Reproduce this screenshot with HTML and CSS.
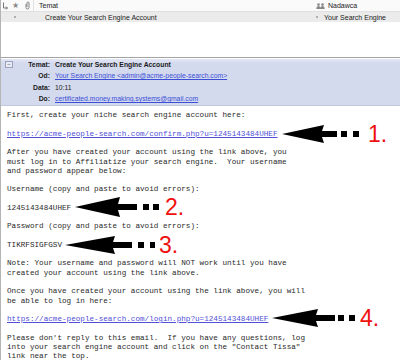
FILE: index.html
```html
<!DOCTYPE html>
<html>
<head>
    <title>Create Your Search Engine Account</title>
    <link rel="stylesheet" href="styles.css">
</head>
<body>
<div class="window">
    <div class="list">
        <div class="list-head">
            <div class="col col-thread">
                <svg width="7" height="8" viewBox="0 0 7 8"><path d="M1.5 0.5v5.5h4M4 4.5l1.5 1.5-1.5 1.5" fill="none" stroke="#777" stroke-width="1"/></svg>
            </div>
            <div class="col col-star">&#9733;</div>
            <div class="col col-clip">
                <svg width="5" height="9" viewBox="0 0 5 9"><path d="M1 3v3.5a1.5 1.5 0 0 0 3 0v-4.5a1 1 0 0 0-2 0v4" fill="none" stroke="#777" stroke-width="0.9"/></svg>
            </div>
            <div class="col col-subject">Temat</div>
            <div class="col col-sender">
                <svg class="people" width="9" height="6" viewBox="0 0 9 6"><circle cx="2.5" cy="1.6" r="1.3" fill="#888"/><circle cx="6.5" cy="1.6" r="1.3" fill="#888"/><path d="M0.3 6c0-2 1-3 2.2-3s2.2 1 2.2 3zM4.3 6c0-2 1-3 2.2-3s2.2 1 2.2 3z" fill="#888"/></svg>
                Nadawca
            </div>
        </div>
        <div class="list-row">
            <div class="col col-thread"></div>
            <div class="col col-star"><span class="dot"></span></div>
            <div class="col col-clip"></div>
            <div class="col col-subject">Create Your Search Engine Account</div>
            <div class="col col-sender"><span class="dot"></span>Your Search Engine</div>
        </div>
    </div>

    <div class="msg-header">
        <div class="toggle">&minus;</div>
        <div class="label">Temat:</div>
        <div class="value subject">Create Your Search Engine Account</div>

        <div></div>
        <div class="label">Od:</div>
        <div class="value"><a href="#">Your Search Engine &lt;admin@acme-people-search.com&gt;</a></div>

        <div></div>
        <div class="label">Data:</div>
        <div class="value">10:11</div>

        <div></div>
        <div class="label">Do:</div>
        <div class="value"><a href="#">certificated.money.making.systems@gmail.com</a></div>
    </div>

    <div class="msg-body">
<pre>First, create your niche search engine account here:

<a href="#">https://acme-people-search.com/confirm.php?u=1245143484UHEF</a>

After you have created your account using the link above, you
must log in to Affiliatize your search engine.  Your username
and password appear below:

Username (copy and paste to avoid errors):

1245143484UHEF

Password (copy and paste to avoid errors):

TIKRFSIGFGSV

Note: Your username and password will NOT work until you have
created your account using the link above.

Once you have created your account using the link above, you will
be able to log in here:

<a href="#">https://acme-people-search.com/login.php?u=1245143484UHEF</a>

Please don't reply to this email.  If you have any questions, log
into your search engine account and click on the "Contact Tissa"
link near the top.</pre>
    </div>

    <!-- arrows drawn over the mail text -->
    <div class="pointer p1">
        <svg width="80" height="18" viewBox="0 0 80 18"><polygon points="0,9 42,0 40,6 55,6 55,12 40,12 42,18" fill="#000"/><rect x="59" y="6" width="6" height="6"/><rect x="71" y="6" width="6" height="6"/></svg>
        <span class="num">1.</span>
    </div>
    <div class="pointer p2">
        <svg width="84" height="20" viewBox="0 0 84 20"><polygon points="0,10 45,0 43,7 62,7 62,13 43,13 45,20" fill="#000"/><rect x="68" y="7" width="6" height="6"/><rect x="78" y="7" width="6" height="6"/></svg>
        <span class="num">2.</span>
    </div>
    <div class="pointer p3">
        <svg width="90" height="18" viewBox="0 0 90 18"><polygon points="0,9 50,0 48,6 67,6 67,12 48,12 50,18" fill="#000"/><rect x="73" y="6" width="6" height="6"/><rect x="85" y="6" width="6" height="6"/></svg>
        <span class="num">3.</span>
    </div>
    <div class="pointer p4">
        <svg width="84" height="18" viewBox="0 0 84 18"><polygon points="0,9 46,0 44,6 63,6 63,12 44,12 46,18" fill="#000"/><rect x="66" y="6" width="6" height="6"/><rect x="77" y="6" width="6" height="6"/></svg>
        <span class="num">4.</span>
    </div>
</div>
</body>
</html>
```

FILE: styles.css
```css
body {
    margin: 0;
    padding: 0;
    background: #fff;
    font-family: "Liberation Sans", Arial, sans-serif;
}
.window {
    position: relative;
    width: 400px;
    height: 360px;
    overflow: hidden;
    border-left: 1px solid #b4b4b4;
    box-sizing: border-box;
}
.list {
    height: 57px;
    border-bottom: 1px solid #a4a4a4;
    font-size: 7px;
    color: #222;
}
.list-head, .list-row {
    display: flex;
    align-items: center;
}
.list-head {
    height: 11px;
    background: #fafafa;
    border-bottom: 1px solid #e0e0e0;
}
.list-row {
    height: 10px;
    background: #ebebeb;
}
.col {
    height: 100%;
    display: flex;
    align-items: center;
    box-sizing: border-box;
}
.col-thread {
    width: 8px;
    justify-content: center;
}
.col-star {
    width: 12px;
    justify-content: center;
    color: #8a8a8a;
    font-size: 8px;
}
.col-clip {
    width: 12px;
    justify-content: center;
}
.col-subject {
    flex: 1;
    padding-left: 5px;
}
.list-head .col-subject {
    border-left: 1px solid #e2e2e2;
}
.list-row .col-subject {
    padding-left: 12px;
}
.col-sender {
    width: 87px;
    padding-left: 3px;
}
.people {
    margin-right: 3px;
}
.dot {
    display: inline-block;
    width: 2px;
    height: 2px;
    border-radius: 1px;
    background: #999;
    margin-right: 6px;
}
.col-star .dot {
    margin: 0;
}
.msg-header {
    display: grid;
    grid-template-columns: 14px 30px 1fr;
    column-gap: 5px;
    grid-auto-rows: 11.3px;
    align-items: center;
    margin-top: 1px;
    padding-bottom: 1px;
    background: linear-gradient(#e4e8f5, #d4daee 4px);
    border-bottom: 1px solid #c2c8dc;
    font-size: 6.8px;
    color: #1a1a1a;
}
.toggle {
    width: 6px;
    height: 5px;
    margin-left: 4px;
    border: 1px solid #9aa2bc;
    background: #e8ebf6;
    font-size: 6px;
    line-height: 5px;
    text-align: center;
    color: #555;
}
.label {
    text-align: right;
    font-weight: bold;
}
.value.subject {
    font-weight: bold;
}
.value a {
    color: #3b4fd6;
}
.msg-body {
    padding: 5px 7px 0 6px;
}
.msg-body pre {
    margin: 0;
    font-family: "Liberation Mono", "Courier New", monospace;
    font-size: 7.65px;
    line-height: 9.27px;
    color: #2a2a2a;
}
.msg-body a {
    color: #5050d8;
}
.pointer {
    position: absolute;
    display: flex;
    align-items: center;
}
.pointer svg {
    display: block;
}
.num {
    color: #f01010;
    font-size: 23px;
    line-height: 20px;
    margin-left: 6px;
}
.p1 { left: 281px; top: 124px; }
.p2 { left: 74px; top: 197px; }
.p3 { left: 64px; top: 235px; }
.p4 { left: 271px; top: 308px; }
.p2 .num { margin-left: 6px; }
.p3 .num { margin-left: 4px; }
.p4 .num { margin-left: 4px; }
```
